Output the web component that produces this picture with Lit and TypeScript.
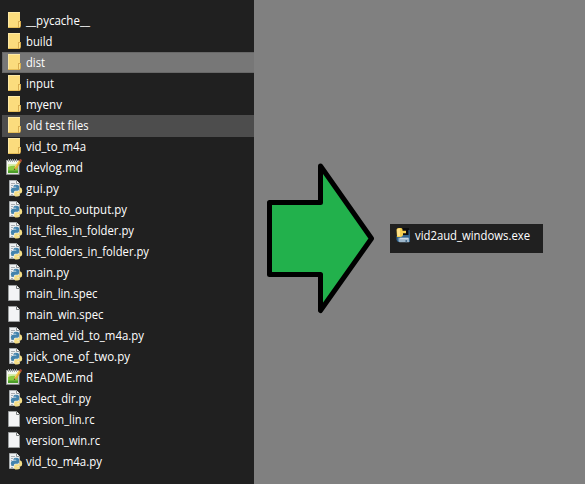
import { LitElement, html, svg, css } from "lit";
import { customElement, property } from "lit/decorators.js";

type Kind = "folder" | "python" | "note" | "blank" | "app";
interface Entry { name: string; kind: Kind; width: number; state?: string }

const entries: Entry[] = [
  { name: "__pycache__", kind: "folder", width: 64 },
  { name: "build", kind: "folder", width: 26.5 },
  { name: "dist", kind: "folder", width: 19 },
  { name: "input", kind: "folder", width: 28 },
  { name: "myenv", kind: "folder", width: 36 },
  { name: "old test files", kind: "folder", width: 62.5, state: "hovered" },
  { name: "vid_to_m4a", kind: "folder", width: 60 },
  { name: "devlog.md", kind: "note", width: 57 },
  { name: "gui.py", kind: "python", width: 33 },
  { name: "input_to_output.py", kind: "python", width: 101 },
  { name: "list_files_in_folder.py", kind: "python", width: 108 },
  { name: "list_folders_in_folder.py", kind: "python", width: 123 },
  { name: "main.py", kind: "python", width: 43 },
  { name: "main_lin.spec", kind: "blank", width: 71.5 },
  { name: "main_win.spec", kind: "blank", width: 77.5 },
  { name: "named_vid_to_m4a.py", kind: "python", width: 118 },
  { name: "pick_one_of_two.py", kind: "python", width: 104 },
  { name: "README.md", kind: "note", width: 67 },
  { name: "select_dir.py", kind: "python", width: 65 },
  { name: "version_lin.rc", kind: "blank", width: 68.5 },
  { name: "version_win.rc", kind: "blank", width: 74 },
  { name: "vid_to_m4a.py", kind: "python", width: 76 },
];
entries[2].state = "selected";

const icons: Record<Kind, unknown> = {
  folder: svg`
    <path d="M2 2H14V18H2Z" fill="#fbdc7d"/>
    <path d="M2 2H14V3H3V18H2Z" fill="#fde9a6"/>
    <path d="M2 17H13V18H2Z" fill="#e6be58"/>
    <path d="M12 11H15V16L14 18H12Z" fill="#d9ae50"/>
    <path d="M13 12H14V17H13Z" fill="#ffe38a"/>`,
  blank: svg`
    <path d="M2.5 2.5H10.5L13.5 5.5V17.5H2.5Z" fill="#f3f4f5" stroke="#9c9f9f"/>
    <path d="M10.5 2.5V5.5H13.5" fill="#fff" stroke="#767b7b"/>`,
  python: svg`
    <path d="M3.5 2.5H10.5L13.5 5.5V17.5H3.5Z" fill="#eef1f2" stroke="#a9adaf"/>
    <path d="M5 5.5H9M5 7.5H7M5 9.5H6M5 14.5H6M5 16.5H7" stroke="#a9aeb3"/>
    <path d="M10.5 2.5V5.5H13.5" fill="#fff" stroke="#8b9092"/>
    <path d="M7.5 8Q7.5 6.8 10 6.8T13 8V11.3Q13 12.7 11.4 12.7H9Q7.7 12.9 7.7 15H6.5Q4.8 14.4 4.8 12.3T6.7 9.8H10.3V9.3H7.5Z" fill="#4383ac"/>
    <rect x="8.5" y="7.7" width="1" height="1" fill="#a5c7db"/>
    <path d="M13.6 9.6H14.5Q16.2 10.2 16.2 12.7T14.5 15.4H11.3V16H13.6V17.2Q13.2 18.6 11 18.6T8.2 17.4V14.9Q8.2 13.3 10 13.3H12.2Q13.6 13.2 13.6 11.7Z" fill="#f4de86"/>`,
  note: svg`
    <rect x=".5" y="3.5" width="12.5" height="13.8" fill="#f5f8ef" stroke="#909394"/>
    <path d="M2 7H12V16H2Z" fill="#d4edaa"/>
    <path d="M2 10Q7 8 12 9.5V16H2Z" fill="#8bcb43"/>
    <path d="M2 13.5H12V16H2Z" fill="#4c9f2a"/>
    <path d="M2.5 2V5M4.5 2V5M6.5 2V5M8.5 2V5M10.5 2V5" stroke="#a2a6a7"/>
    <path d="M8 13L8.8 9.8L13 3.2L15.2 4.6L11 11.2Z" fill="#e4aa35"/>
    <path d="M9 10.4L13.1 3.9" stroke="#ffe173" stroke-width=".8"/>
    <path d="M12.8 3.6L14 2Q16 2 15.9 3.8L15 5.2Z" fill="#a94735"/>
    <path d="M7.8 13.2L8.2 11.4L9.5 12.2Z" fill="#4d3d25"/>`,
  app: svg`
    <path d="M6 3H14V12H6Z" fill="#0c0d0e"/>
    <path d="M1.5 11H3V10H13.5V5H14.5L15 10.5V17H3L1.5 15Z" fill="#32658f"/>
    <path d="M3.5 12.8H14V17.3H4.5L3.5 16Z" fill="#9cb6ca"/>
    <path d="M5 12.8H13V14.2H5Z" fill="#cbd8e2"/>
    <path d="M1.5 4.8Q1.5 3 3.8 3H6Q7.5 3 7.5 4.5V5.8H11V8.2H8V10Q7.8 12 5.2 12H2Z" fill="#f5cf4e"/>
    <path d="M2 5Q2 3.5 4 3.5H5V11H2.5Z" fill="#ffe28a"/>
    <path d="M10.5 15H12V17.3H10.5Z" fill="#476c89"/>`,
};

@customElement("file-entry")
class FileEntry extends LitElement {
  @property({ attribute: false }) entry!: Entry;
  static styles = css`
    :host { display: flex; height: 21px; }
    svg { display: block; flex: none; height: 21px; overflow: visible; }
    .icon { width: 20px; }
    .label { width: 120px; }
    text { font: 12px "Open Sans", "Noto Sans", sans-serif; fill: #fff; }
  `;
  render() {
    const e = this.entry;
    return html`
      <svg class="icon" viewBox="0 0 20 21">${icons[e.kind]}</svg>
      <svg class="label"><text x="0" y="15" textLength=${e.width} lengthAdjust="spacingAndGlyphs">${e.name}</text></svg>`;
  }
}

@customElement("app-root")
class AppRoot extends LitElement {
  static styles = css`
    :host { display: flex; width: 585px; height: 484px; background: #808080; overflow: hidden; }
    .list { box-sizing: border-box; width: 254px; height: 484px; padding-top: 10px; background: #202020; flex: none; }
    .row { box-sizing: border-box; height: 21px; margin-left: 2px; padding-left: 4px; }
    .selected { background: #777; box-shadow: inset 0 1px #686868, inset 0 -1px #686868, inset 1px 0 #686868; }
    .hovered { background: #4d4d4d; box-shadow: 0 1px #4d4d4d; }
    .arrow { width: 110px; height: 152px; margin: 162px 0 0 12px; flex: none; }
    .result { box-sizing: border-box; width: 153px; height: 29px; margin: 224px 0 0 14px; padding: 1px 0 0 5px; background: #202020; flex: none; }
  `;
  render() {
    return html`
      <div class="list">
        ${entries.map((e) => html`<div class="row ${e.state ?? ""}"><file-entry .entry=${e}></file-entry></div>`)}
      </div>
      <svg class="arrow" viewBox="266 162 110 152">
        <path d="M269.5 202.5H320.5V166L371.5 238.5L320.5 310.5V274.5H269.5Z" fill="#22b14c" stroke="#000" stroke-width="5" stroke-linejoin="round"/>
      </svg>
      <div class="result">
        <file-entry .entry=${{ name: "vid2aud_windows.exe", kind: "app", width: 115 }}></file-entry>
      </div>`;
  }
}
